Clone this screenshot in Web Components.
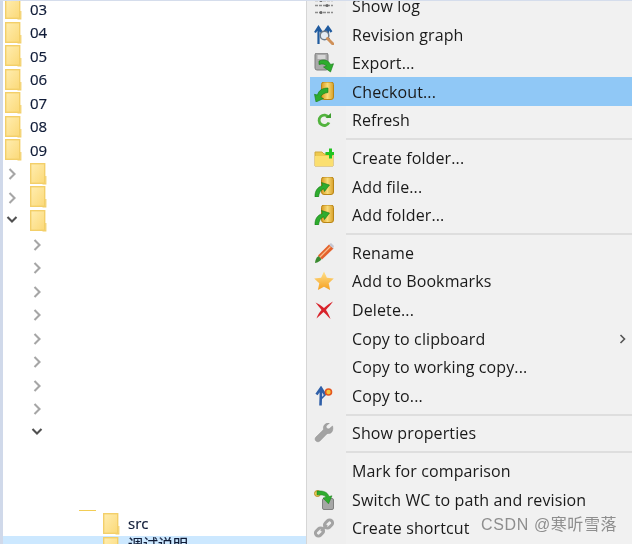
<!DOCTYPE html>
<html><head><meta charset="utf-8"><style>
html,body{margin:0;padding:0;background:#fff}
body{width:632px;height:544px;overflow:hidden}
</style></head><body>
<x-app>
<x-tree slot="tree">
<x-row top="-2.5" label="03" x="5"></x-row><x-row label="04" x="5"></x-row><x-row label="05" x="5"></x-row><x-row label="06" x="5"></x-row><x-row label="07" x="5"></x-row><x-row label="08" x="5"></x-row><x-row label="09" x="5"></x-row>
<x-row x="30" chev="r" cx="6"></x-row><x-row x="30" chev="r" cx="6"></x-row><x-row x="30" chev="d" cx="6"></x-row>
<x-row chev="r" cx="31"></x-row><x-row chev="r" cx="31"></x-row><x-row chev="r" cx="31"></x-row><x-row chev="r" cx="31"></x-row><x-row chev="r" cx="31"></x-row><x-row chev="r" cx="31"></x-row><x-row chev="r" cx="31"></x-row><x-row chev="r" cx="31"></x-row><x-row chev="d" cx="31"></x-row>
<x-gap></x-gap>
<x-row x="103" label="src"></x-row>
<x-row x="103" label="调试说明" selected></x-row>
</x-tree>
<x-menu slot="menu">
<x-item icon="log">Show log</x-item>
<x-item icon="graph">Revision graph</x-item>
<x-item icon="export">Export...</x-item>
<x-item icon="checkout" active>Checkout...</x-item>
<x-item icon="refresh">Refresh</x-item>
<x-sep></x-sep>
<x-item icon="newfolder">Create folder...</x-item>
<x-item icon="add">Add file...</x-item>
<x-item icon="add">Add folder...</x-item>
<x-sep></x-sep>
<x-item icon="rename">Rename</x-item>
<x-item icon="star">Add to Bookmarks</x-item>
<x-item icon="del">Delete...</x-item>
<x-item sub>Copy to clipboard</x-item>
<x-item>Copy to working copy...</x-item>
<x-item icon="copyto">Copy to...</x-item>
<x-sep></x-sep>
<x-item icon="wrench">Show properties</x-item>
<x-sep></x-sep>
<x-item>Mark for comparison</x-item>
<x-item icon="switch">Switch WC to path and revision</x-item>
<x-item icon="link">Create shortcut</x-item>
</x-menu>
</x-app>
<script>
const FONT='"Open Sans","Noto Sans","Noto Sans CJK SC",sans-serif';
const GOLD=`<linearGradient id="au" x1="0" x2="1" y1="0" y2="0"><stop offset="0" stop-color="#d99a1e"/><stop offset=".5" stop-color="#f8dc78"/><stop offset="1" stop-color="#d9a02a"/></linearGradient>`;
const ICONS={
log:`<g fill="none" stroke="#8c8c8c" stroke-width="1.300"><path d="M1 4.500h18M1 9.500h18M1 16.500h18" stroke-dasharray="3 1"/></g><g fill="#666"><circle cx="7" cy="4.500" r="1.500"/><circle cx="13" cy="9.500" r="1.500"/><circle cx="7" cy="16.500" r="1.500"/></g>`,
graph:`<path d="M4.500 19V3M1 7.500 4.500 2 8 7.500M14 9V3M10.500 7 14 2l3.500 5" fill="none" stroke="#1f5a9e" stroke-width="2.200"/><path d="M4.500 5l11 9" stroke="#1f5a9e" stroke-width="1.500"/><circle cx="10.500" cy="10.500" r="4.300" fill="#e4ecf3" stroke="#6f7c88" stroke-width="1.500"/><path d="M13.500 13.500 19 19" stroke="#cf9058" stroke-width="3" stroke-linecap="round"/>`,
export:`<rect x="1" y="0" width="13" height="17" rx="2" fill="#a9a9a9" stroke="#7d7d7d"/><rect x="3.500" y="2" width="8" height="4" fill="#d6d6d6"/><path d="M5 8c6-2.500 10 0 11.500 3.500l3-.8L16.500 19 9.500 14l3-.8C11 11 8.500 10.500 5 11.500z" fill="#2eac2e" stroke="#167a16" stroke-width=".6"/>`,
checkout:`<defs>${GOLD}</defs><rect x="7.500" y="0" width="12" height="17.500" rx="2.500" fill="url(#au)" stroke="#b98616"/><path d="M14 6C8.500 6 4.500 8.500 3.500 13L.5 12.300 2 20l7.500-3.500-3-1.200C7.500 12.500 10 11 14 10.500z" fill="#2eac2e" stroke="#167a16" stroke-width=".6"/>`,
add:`<defs>${GOLD}</defs><rect x="7.500" y="0" width="12" height="17.500" rx="2.500" fill="url(#au)" stroke="#b98616"/><path d="M1 20c-.3-6 2.500-10 7.500-11.500L7.500 5.500l8 2.500-5 6.500-1-2.800C7 12.700 5 15.500 4.500 20z" fill="#2eac2e" stroke="#167a16" stroke-width=".6"/>`,
refresh:`<path d="M14.700 7.500A5.200 5.200 0 1 0 15 12.500" fill="none" stroke="#52b33e" stroke-width="2.800"/><path d="M11.500 8h5.500V3z" fill="#3f9e30"/>`,
newfolder:`<path d="M1 4h7l2 2h9v12H1z" fill="#eec94e" stroke="#d0a93c"/><path d="M1 8h18v10H1z" fill="#fbdf70"/><path d="M11.500 4h3.500V.5h3V4H20v3h-2v3.500h-3V7h-3.500z" fill="#22c422"/>`,
rename:`<path d="M1 20c.2-3.500 1.500-5.500 3.500-7l3 3c-1.200 2-3.300 3.500-6.500 4z" fill="#3a8a30"/><path d="M4 12.500 15 1.500l4.500 4L8 16.500z" fill="#e4622c"/><path d="M15 1.500l2-1.500 3 3-1 2.500z" fill="#c6c6d2"/><path d="M6 14 16.500 3.500" stroke="#f8bc8a" stroke-width="1.300"/>`,
star:`<defs><linearGradient id="s" x1="0" y1="0" x2="0" y2="1"><stop offset="0" stop-color="#ffe08a"/><stop offset="1" stop-color="#f5a020"/></linearGradient></defs><path d="M10 .5l2.900 6.300 6.900.8-5.100 4.700 1.400 6.800L10 15.700l-6.100 3.400 1.400-6.800L.2 7.600l6.900-.8z" fill="url(#s)"/>`,
del:`<path d="M1.500 2.500c3.500 1.500 6 3.500 8.500 5.500 2.800-2.500 5.500-4.500 9-6.500-2.500 3.500-5 6-7 8.500 1.800 2.800 3.300 5.500 4.500 9-2.500-2.500-5-5-7-7-2.300 2.300-4.500 4.500-7 6.500 1.200-3.500 3-6.200 5-8.500C6 7.500 3.700 5.500 1.500 2.500z" fill="#d8232b"/>`,
copyto:`<path d="M6.500 19.500 7 4.500M2.500 8.500 7 2l4 6.500" fill="none" stroke="#2f5fa8" stroke-width="2.600"/><path d="M7 13l6-6" stroke="#2f5fa8" stroke-width="1.600"/><circle cx="14.500" cy="6" r="3" fill="#f6c43c" stroke="#e4551f" stroke-width="1.600"/>`,
wrench:`<path d="M18.500 3l-3.500 3-2.500-.5-.5-2.500 3.500-3C12.500-.5 9 2 9.500 5.500c.1.800-.1 1.300-.6 1.800L2 14c-1.200 1.200-1.200 3 0 4s2.800 1 3.900 0l6.800-6.900c.5-.5 1-.7 1.800-.6 3 .2 5.200-3 4-7.500z" fill="#a3a3a3" stroke="#8a8a8a" stroke-width=".5"/>`,
switch:`<rect x="8.500" y="8.500" width="11" height="11" rx="1.500" fill="#a6a6a6" stroke="#808080"/><circle cx="3.500" cy="3.500" r="3" fill="#f0cf5a" stroke="#b8922a"/><path d="M3 1c6.500-.5 10.500 1 12 5.500l3-.7-3.500 8L9 8l3-.7C10.500 5 7.500 4.500 3 5z" fill="#2eac2e" stroke="#167a16" stroke-width=".5"/>`,
link:`<g fill="none" stroke="#a3a3a3" stroke-width="3"><rect x="1" y="11" width="9" height="6" rx="3" transform="rotate(-45 5.500 14)"/><rect x="10" y="3" width="9" height="6" rx="3" transform="rotate(-45 14.500 6)"/></g><path d="M7 13 13 7" stroke="#a3a3a3" stroke-width="2.400"/>`
};
const define=(n,c)=>customElements.define(n,c);
define('x-app',class extends HTMLElement{constructor(){super();this.attachShadow({mode:'open'}).innerHTML=`<style>
:host{display:flex;width:632px;height:544px;overflow:hidden;font-family:${FONT};color:#1c1c1c;filter:blur(.4px);position:relative}
.edge{width:3px;background:#d0d9ea;flex:none}
.tree{width:303px;flex:none;background:#fff;overflow:hidden}
.menu{flex:1;min-width:0;background:linear-gradient(90deg,#efefef 39px,#f1f1f1 39px);border-left:1px solid #d6d6d6;overflow:hidden}
.top{position:absolute;left:0;top:0;width:632px;height:1px;background:#d5ddec}
.mark{position:absolute;left:481px;top:514px;font:16px/22px "Liberation Sans","Noto Sans CJK SC",sans-serif;color:rgba(120,120,120,.82);letter-spacing:.62px;white-space:nowrap}
</style><div class="edge"></div><div class="tree"><slot name="tree"></slot></div><div class="menu"><slot name="menu"></slot></div><div class="top"></div><div class="mark">CSDN @寒听雪落</div>`}});
define('x-tree',class extends HTMLElement{constructor(){super();this.attachShadow({mode:'open'}).innerHTML=`<style>:host{display:block;height:544px;overflow:hidden}</style><slot></slot>`}});
define('x-gap',class extends HTMLElement{constructor(){super();this.attachShadow({mode:'open'}).innerHTML=`<style>:host{display:block;height:68px;box-sizing:border-box;padding:66px 0 0 76px}i{display:block;width:17px;height:1px;background:#f2cd55}</style><i></i>`}});
define('x-row',class extends HTMLElement{connectedCallback(){
 const x=this.getAttribute('x'),l=this.getAttribute('label')||'',c=this.getAttribute('chev'),cx=+this.getAttribute('cx')||0,t=this.getAttribute('top'),sel=this.hasAttribute('selected');
 const r=this.attachShadow({mode:'open'});
 const chev=c?`<svg class="c" style="left:${cx-3}px;top:${c==='r'?5.2:4}px" width="14" height="14" viewBox="0 0 14 14"><path d="${c==='r'?'M3.500 2 8.500 7 3.500 12':'M1.500 4 6 8.500 10.500 4'}" fill="none" stroke="${c==='r'?'#a6a6a6':'#505050'}" stroke-width="2.100"/></svg>`:'';
 const fx=x?+x-3:0;
 const folder=x?`<svg class="f" style="left:${fx}px" width="17" height="22" viewBox="0 0 17 22"><defs><linearGradient id="g" x1="0" y1="0" x2="1" y2="1"><stop offset="0" stop-color="#ffedb0"/><stop offset="1" stop-color="#fbd978"/></linearGradient></defs><rect x=".7" y=".7" width="14" height="19.600" fill="url(#g)" stroke="#f3cf69" stroke-width="1.400"/><path d="M15.800 13v7.800H12.500" fill="none" stroke="#f3cf69" stroke-width="1.200"/></svg>`:'';
 r.innerHTML=`<style>
 :host{display:block;position:relative;height:23.500px;${t?`margin-top:${t}px;`:''}${sel?'background:#cce8ff;':''}}
 .f{position:absolute;top:${sel?'1':'.5'}px}
 .c{position:absolute}
 .t{position:absolute;left:${fx+25}px;top:0;font-size:15px;line-height:${sel?'17':'23'}px;color:#101c38;-webkit-text-stroke:.2px #101c38;white-space:nowrap}
 </style>${chev}${folder}${l?`<span class="t">${l}</span>`:''}`;
}});
define('x-menu',class extends HTMLElement{constructor(){super();this.attachShadow({mode:'open'}).innerHTML=`<style>:host{display:block;margin-top:-8.300px}</style><slot></slot>`}});
define('x-sep',class extends HTMLElement{constructor(){super();this.attachShadow({mode:'open'}).innerHTML=`<style>:host{display:flex;align-items:center;height:9px;padding-left:39px}i{flex:1;height:2px;background:#dedede}</style><i></i>`}});
define('x-item',class extends HTMLElement{connectedCallback(){
 const ic=this.getAttribute('icon'),a=this.hasAttribute('active'),s=this.hasAttribute('sub');
 this.attachShadow({mode:'open'}).innerHTML=`<style>
 :host{display:flex;align-items:center;height:28.600px;margin-left:3px;${a?'background:#90c8f6;':''}font-size:16px;white-space:nowrap;color:#1a1a1a;letter-spacing:.12px}
 .i{width:20px;height:20px;margin-left:4px;flex:none}
 .l{margin-left:18px;flex:1}
 .a{margin-right:4px}
 </style><svg class="i" viewBox="0 0 20 20">${ICONS[ic]||''}</svg><span class="l"><slot></slot></span>${s?'<svg class="a" width="10" height="12" viewBox="0 0 10 12"><path d="M2.500 2 6.500 6 2.500 10" fill="none" stroke="#555" stroke-width="1.600"/></svg>':''}`;
}});
</script>
</body></html>
